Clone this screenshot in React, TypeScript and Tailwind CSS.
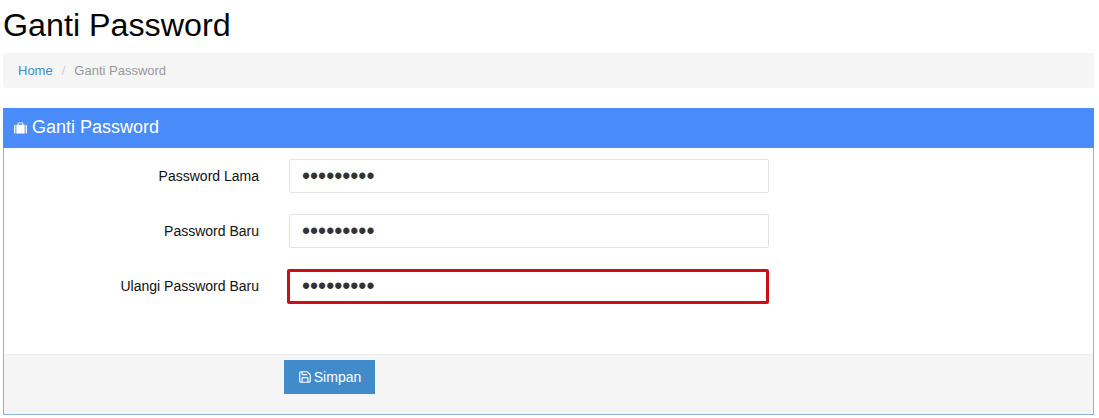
import { Save } from 'lucide-react';

const fields = [
  { label: 'Password Lama', highlight: false },
  { label: 'Password Baru', highlight: false },
  { label: 'Ulangi Password Baru', highlight: true },
];

function BriefcaseIcon() {
  return (
    <svg width="13" height="12" viewBox="0 0 14 12" className="mr-[5px] mt-[2px] shrink-0" fill="white">
      <path d="M5 0h4a1 1 0 0 1 1 1v1.5h1.5V12h-9V2.5H4V1a1 1 0 0 1 1-1zM5 1v1.5h4V1z" fillRule="evenodd" />
      <path d="M0 4a1.5 1.5 0 0 1 1.5-1.5V12A1.5 1.5 0 0 1 0 10.5zM12.5 2.5A1.5 1.5 0 0 1 14 4v6.5a1.5 1.5 0 0 1-1.5 1.5z" />
    </svg>
  );
}

export default function App() {
  return (
    <div className="h-[418px] w-[1099px] overflow-hidden bg-white px-[3px] font-['Liberation_Sans',Arial,sans-serif]">
      <div className="mr-[2px]">
        <h1 className="pt-[7px] text-[32.25px] leading-[36px] text-[#050505]">Ganti Password</h1>

        <nav className="mt-[10px] flex h-[35px] items-center rounded-[3px] bg-[#f5f5f5] pl-[15px] pt-px text-[13px] text-[#999]">
          <a className="text-[#428bca]">Home</a>
          <span className="px-[9px] text-[#ccc]">/</span>
          <span>Ganti Password</span>
        </nav>

        <section className="mt-[20px] border border-[#8fb4dc] border-t-0 bg-white">
          <header className="-mx-px flex h-[40px] items-center bg-[#4a8cfa] pb-[2px] pl-[11px] text-[18px] text-white">
            <BriefcaseIcon />
            Ganti Password
          </header>

          <div className="flex h-[206px] flex-col gap-[21px] pt-[11px]">
            {fields.map(({ label, highlight }) => (
              <div key={label} className="flex items-center">
                <label className="w-[255px] text-right text-[14px] text-[#111]">{label}</label>
                <input
                  type="password"
                  readOnly
                  value="123456789"
                  className={
                    highlight
                      ? 'ml-[28px] h-[35px] w-[482px] rounded-[2px] border-[3px] border-[#cc0f17] bg-white pl-[12px] text-[23px] leading-none text-[#333] outline-none'
                      : 'ml-[30px] h-[34px] w-[480px] rounded-[2px] border border-[#e3e3e3] bg-white pl-[12px] text-[23px] leading-none text-[#333] outline-none'
                  }
                />
              </div>
            ))}
          </div>

          <footer className="h-[60px] border-t border-[#eee] bg-[#f5f5f5] pl-[280px] pt-[5px]">
            <button className="flex h-[34px] w-[91px] items-center justify-center gap-[2px] bg-[#428bca] text-[14px] text-white">
              <Save size={14} />
              Simpan
            </button>
          </footer>
        </section>
      </div>
    </div>
  );
}
